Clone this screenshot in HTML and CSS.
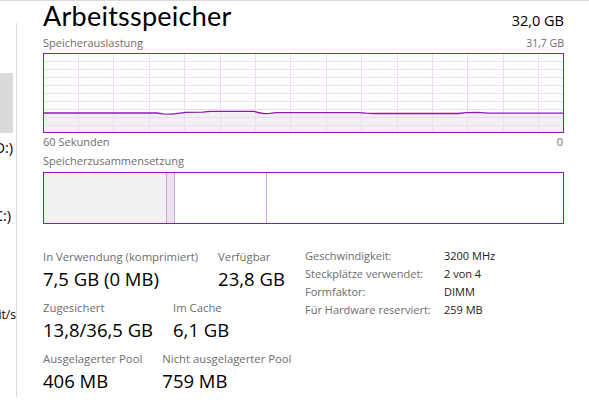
FILE: index.html
```html
<!DOCTYPE html>
<html lang="de">
<head>
<meta charset="utf-8">
<title>Arbeitsspeicher</title>
<link rel="stylesheet" href="styles.css">
</head>
<body>
<div class="app">
  <aside class="sidebar">
    <div class="side-item side-cpu"></div>
    <div class="side-item side-mem"></div>
    <div class="side-item side-disk"><div class="side-title"><span>D:)</span></div></div>
    <div class="side-item side-disk side-disk-c"><div class="side-title"><span>C:)</span></div></div>
    <div class="side-item side-eth"><div class="side-sub"><span>it/s</span></div></div>
  </aside>
  <main class="main">
    <header class="head">
      <h1 class="title">Arbeitsspeicher</h1>
      <span class="total">32,0 GB</span>
    </header>
    <div class="caption-row caption-top">
      <span>Speicherauslastung</span>
      <span class="cap-small">31,7 GB</span>
    </div>
    <svg class="chart" width="521" height="80" viewBox="0 0 521 80" xmlns="http://www.w3.org/2000/svg">
      <path class="chart-fill" d="M0 60 L114 60 L120 60.8 L129 61.2 L135 60.3 L143 59.4 L160 59.2 L167 58.4 L211 58.4 L215 59.5 L221 60.6 L227 60.3 L233 59.6 L315 59.6 L323 60.2 L331 60.5 L415 60.5 L423 59.6 L435 59.3 L445 60.2 L521 60.2 V80 H0 Z"/>
      <path class="chart-grid" d="M1 8.5H520M1 16.5H520M1 24.5H520M1 32.5H520M1 40.5H520M1 48.5H520M1 56.5H520M1 64.5H520M1 72.5H520M35.5 1V79M70.5 1V79M106.5 1V79M141.5 1V79M177.5 1V79M212.5 1V79M247.5 1V79M283.5 1V79M318.5 1V79M354.5 1V79M389.5 1V79M424.5 1V79M460.5 1V79M495.5 1V79"/>
      <polyline class="chart-line" points="0,60 114,60 120,60.8 129,61.2 135,60.3 143,59.4 160,59.2 167,58.4 211,58.4 215,59.5 221,60.6 227,60.3 233,59.6 315,59.6 323,60.2 331,60.5 415,60.5 423,59.6 435,59.3 445,60.2 521,60.2"/>
      <rect class="chart-border" x="0.5" y="0.5" width="520" height="79"/>
    </svg>
    <div class="caption-row caption-axis">
      <span>60 Sekunden</span>
      <span>0</span>
    </div>
    <div class="caption-row caption-compo">
      <span>Speicherzusammensetzung</span>
    </div>
    <div class="compo">
      <div class="seg seg-used"></div>
      <div class="seg seg-modified"></div>
      <div class="seg seg-standby"></div>
      <div class="seg seg-free"></div>
    </div>
    <section class="stats">
      <div class="stats-left">
        <div class="stat-row">
          <div class="stat"><div class="stat-label">In Verwendung (komprimiert)</div><div class="stat-value">7,5 GB (0 MB)</div></div>
          <div class="stat"><div class="stat-label">Verfügbar</div><div class="stat-value">23,8 GB</div></div>
        </div>
        <div class="stat-row">
          <div class="stat"><div class="stat-label">Zugesichert</div><div class="stat-value">13,8/36,5 GB</div></div>
          <div class="stat"><div class="stat-label">Im Cache</div><div class="stat-value">6,1 GB</div></div>
        </div>
        <div class="stat-row">
          <div class="stat"><div class="stat-label">Ausgelagerter Pool</div><div class="stat-value">406 MB</div></div>
          <div class="stat"><div class="stat-label">Nicht ausgelagerter Pool</div><div class="stat-value">759 MB</div></div>
        </div>
      </div>
      <dl class="specs">
        <dt>Geschwindigkeit:</dt><dd>3200 MHz</dd>
        <dt>Steckplätze verwendet:</dt><dd>2 von 4</dd>
        <dt>Formfaktor:</dt><dd>DIMM</dd>
        <dt>Für Hardware reserviert:</dt><dd>259 MB</dd>
      </dl>
    </section>
  </main>
</div>
</body>
</html>
```

FILE: styles.css
```css
html, body {
  margin: 0;
  padding: 0;
}

body {
  width: 589px;
  height: 411px;
  overflow: hidden;
  background: #ffffff;
  border-top: 1px solid #dadada;
  box-sizing: border-box;
  font-family: "Open Sans", "Noto Sans", sans-serif;
  color: #000000;
}

.app {
  display: flex;
  height: 410px;
}

/* ---------- sidebar (clipped) ---------- */
.sidebar {
  flex: none;
  width: 16px;
  height: 374px;
  margin-top: 22px;
  border-right: 1px solid #dadada;
  overflow: hidden;
}

.side-item {
  box-sizing: border-box;
  overflow: hidden;
}

.side-cpu {
  height: 50px;
}

.side-mem {
  height: 60px;
  width: 13px;
  background: #dadada;
}

.side-disk {
  height: 68px;
  padding-top: 5px;
  width: 13px;
}

.side-disk-c {
  padding-right: 2px;
}

.side-title,
.side-sub {
  display: flex;
  justify-content: flex-end;
  white-space: nowrap;
  color: #000;
}

.side-title span,
.side-sub span {
  flex: none;
}

.side-title {
  font-size: 14.5px;
  line-height: 20px;
}

.side-eth {
  padding-top: 38px;
  height: 80px;
}

.side-sub {
  font-size: 12px;
  line-height: 16px;
}

/* ---------- main ---------- */
.main {
  flex: 1;
  padding: 0 25px 0 26px;
}

.head {
  display: flex;
  justify-content: space-between;
  align-items: baseline;
  height: 31px;
}

.title {
  margin: 0;
  font-family: "Lato", "Open Sans", sans-serif;
  font-size: 27px;
  font-weight: 400;
  letter-spacing: 0.25px;
  line-height: 30.5px;
  color: #000;
}

.total {
  font-size: 14.5px;
  color: #000;
}

.caption-row {
  display: flex;
  justify-content: space-between;
  align-items: baseline;
  font-size: 11px;
  line-height: 14px;
  color: #6d6d6d;
}

.caption-top {
  margin-top: 4px;
}

.cap-small {
  font-size: 10.5px;
}

.chart {
  display: block;
  margin-top: 3px;
}

.chart-fill {
  fill: #f3f0f4;
}

.chart-grid {
  fill: none;
  stroke: #ecdcf0;
  stroke-width: 1;
  shape-rendering: crispEdges;
}

.chart-line {
  fill: none;
  stroke: #8b1bb0;
  stroke-width: 1.3;
  stroke-linejoin: round;
}

.chart-border {
  fill: none;
  stroke: #8b1bb0;
  stroke-width: 1;
  shape-rendering: crispEdges;
}

.caption-axis {
  margin-top: 2px;
  padding-right: 1px;
}

.caption-compo {
  margin-top: 5px;
}

/* ---------- composition bar ---------- */
.compo {
  display: flex;
  box-sizing: border-box;
  height: 52px;
  margin-top: 4px;
  border: 1px solid #8b1bb0;
}

.seg {
  box-sizing: border-box;
  border-right: 1px solid #cfa6dc;
}

.seg-used {
  width: 123px;
  background: #f3f0f4;
}

.seg-modified {
  width: 8px;
  background: #ece2f0;
}

.seg-standby {
  width: 92px;
  background: #ffffff;
}

.seg-free {
  flex: 1;
  border-right: none;
  background: #ffffff;
}

/* ---------- stats ---------- */
.stats {
  display: grid;
  grid-template-columns: 262px 1fr;
  align-items: start;
  margin-top: 23px;
}

.stats-left {
  display: flex;
  flex-direction: column;
  gap: 7px;
}

.stat-row {
  display: flex;
  gap: 20px;
}

.stat-row-wide {
  gap: 21px;
}

.stat-label {
  font-size: 11.3px;
  line-height: 19px;
  color: #6d6d6d;
  white-space: nowrap;
}

.stat-value {
  font-size: 18.5px;
  line-height: 25px;
  color: #000;
  white-space: nowrap;
}

.specs {
  display: grid;
  grid-template-columns: 139px auto;
  align-content: start;
  margin: 0;
  font-size: 11px;
  line-height: 18px;
}

.specs dt {
  color: #6d6d6d;
  white-space: nowrap;
}

.specs dd {
  margin: 0;
  color: #1a1a1a;
  white-space: nowrap;
}
```
